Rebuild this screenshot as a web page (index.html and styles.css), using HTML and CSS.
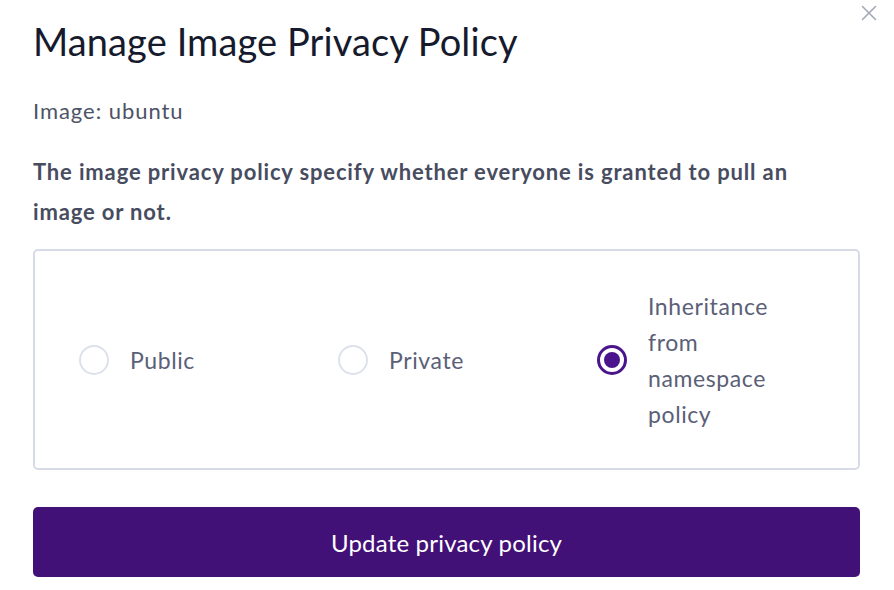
FILE: index.html
```html
<!DOCTYPE html>
<html lang="en">
<head>
<meta charset="utf-8">
<title>Manage Image Privacy Policy</title>
<link rel="stylesheet" href="styles.css">
</head>
<body>
<div class="modal">
  <button class="close" aria-label="Close">
    <svg width="16" height="16" viewBox="0 0 16 16"><path d="M1.5 1.5 L14.5 14.5 M14.5 1.5 L1.5 14.5" stroke="#a3a9b7" stroke-width="1.6" fill="none" stroke-linecap="round"/></svg>
  </button>
  <h1 class="title">Manage Image Privacy Policy</h1>
  <p class="subtitle">Image: ubuntu</p>
  <p class="desc">The image privacy policy specify whether everyone is granted to pull an image or not.</p>
  <div class="options">
    <label class="option"><span class="radio"></span><span class="label">Public</span></label>
    <label class="option"><span class="radio"></span><span class="label">Private</span></label>
    <label class="option"><span class="radio checked"></span><span class="label narrow">Inheritance from namespace policy</span></label>
  </div>
  <button class="submit">Update privacy policy</button>
</div>
</body>
</html>
```

FILE: styles.css
```css
html, body {
  margin: 0;
  padding: 0;
  background: #ffffff;
}
body {
  font-family: Lato, "Open Sans", sans-serif;
}
.modal {
  position: relative;
  width: 827px;
  padding: 18px 34px 0 33px;
}
.close {
  position: absolute;
  top: 5px;
  right: 17px;
  border: 0;
  background: none;
  padding: 0;
  width: 16px;
  height: 16px;
}
.title {
  margin: 0;
  font-size: 38px;
  font-weight: 400;
  line-height: 46px;
  color: #161a2d;
  letter-spacing: 0.1px;
}
.subtitle {
  margin: 33px 0 0;
  font-size: 22px;
  line-height: 28px;
  color: #4d5366;
  letter-spacing: 0.95px;
}
.desc {
  margin: 27px 0 0;
  max-width: 800px;
  font-size: 22px;
  font-weight: 700;
  line-height: 40px;
  color: #474c5f;
  letter-spacing: 0.85px;
}
.options {
  box-sizing: border-box;
  margin-top: 17px;
  border: 2px solid #d7dbe7;
  border-radius: 5px;
  height: 221px;
  display: grid;
  grid-template-columns: 259px 259px 259px;
  align-items: center;
  padding: 0 0 0 44px;
}
.option {
  display: flex;
  align-items: center;
  gap: 21px;
}
.radio {
  box-sizing: border-box;
  width: 30px;
  height: 30px;
  border-radius: 50%;
  border: 2.5px solid #dde1ec;
  background: #fff;
  flex: none;
}
.radio.checked {
  border: 3px solid #4a148c;
  position: relative;
}
.radio.checked::after {
  content: "";
  position: absolute;
  left: 4px;
  top: 4px;
  width: 16px;
  height: 16px;
  border-radius: 50%;
  background: #4a148c;
}
.label {
  font-size: 23px;
  line-height: 36px;
  color: #5a6077;
  letter-spacing: 0.6px;
}
.label.narrow {
  width: 140px;
}
.submit {
  display: block;
  margin-top: 37px;
  width: 827px;
  height: 70px;
  border: 0;
  border-radius: 5px;
  background: #421177;
  color: #ffffff;
  font-family: Lato, "Open Sans", sans-serif;
  font-size: 24px;
  letter-spacing: 0.2px;
}
```
